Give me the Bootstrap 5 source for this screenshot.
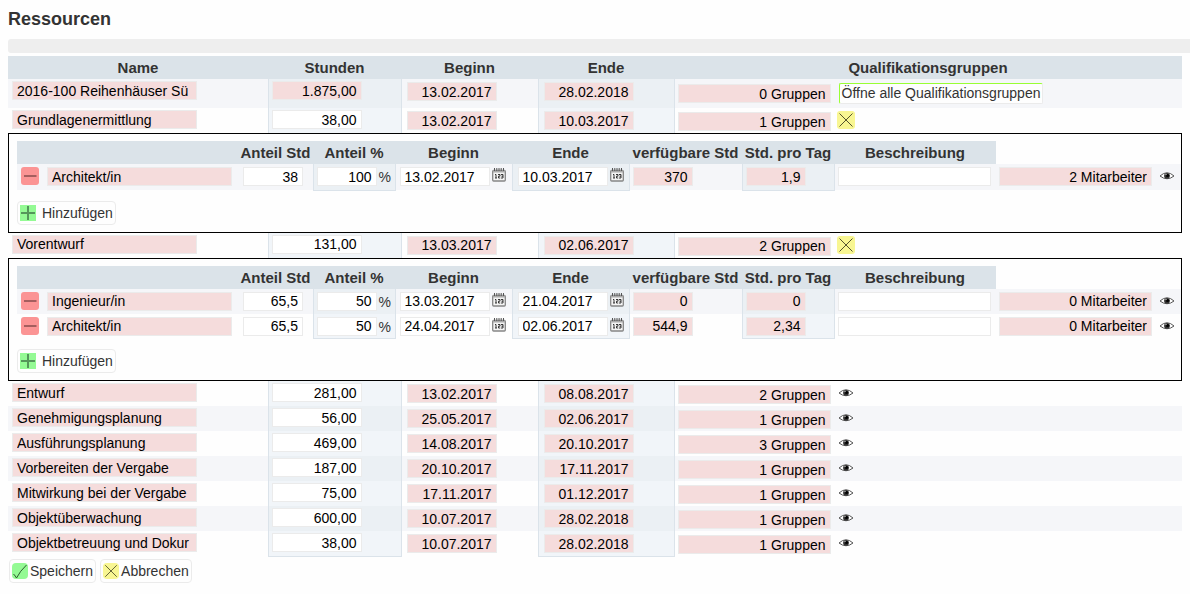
<!DOCTYPE html>
<html lang="de">
<head>
<meta charset="utf-8">
<meta name="viewport" content="width=device-width, initial-scale=1">
<title>Ressourcen</title>
<link rel="stylesheet" href="https://cdn.jsdelivr.net/npm/bootstrap@5.3.0/dist/css/bootstrap.min.css">
<style>
body{font:14px/18px "Liberation Sans",Arial,sans-serif;color:#333;background:#fefefe;padding:0 0 8px 8px}
h1{font-size:18px;line-height:20px;font-weight:700;margin:0;padding:9px 0 10px}
.strip{height:14px;background:#eee;border-radius:3px 0 0 3px;margin-bottom:3px}
.sheet{margin-right:8px}
/* resource grids */
.plan{--bs-table-bg:transparent;--bs-table-color:#333;table-layout:fixed;margin:0;color:#333;vertical-align:top}
.plan>thead>tr>th{height:23px;padding:1px 0 0;background:#dbe3e9;text-align:center;font-size:15px;line-height:22px;font-weight:700;white-space:nowrap}
.plan>thead>tr>th.open{background:transparent}
.plan>tbody>tr>td{padding:3px 0 0 3px;height:25px;line-height:18px}
.plan>tbody>tr.first>td{height:29px}
.plan>tbody>tr.first>td:last-child{padding-top:4px}
.plan>tbody>tr.tall>td{height:26px}
.plan>tbody>tr>td.up{padding-top:2px}
.plan>tbody>tr>td:first-child,.plan>tbody>tr>td:nth-child(2){padding-left:4px}
.plan>tbody>tr>td:nth-child(3){padding-left:5px}
.plan.inner>tbody>tr>td.day{padding-left:4px}
.plan>tbody>tr.shade>td{background:#f5f6f9}
.plan>tbody>tr>td.tint{background:#f1f5f9;border-left:1px solid #dbe3ea;border-right:1px solid #dbe3ea;padding-left:3px}
.plan>tbody>tr>td.tint.day{padding-left:5px}
.plan>tbody>tr.shade>td.tint{background:#ebf0f4}
.plan>tbody>tr:last-child>td.tint{border-bottom:1px solid #dbe3ea}
.plan>tbody>tr>td.nest{padding:0;height:auto}
.subplan{border:1px solid #000;padding:7px 0 7px 8px}
/* fields */
.fld{display:block;height:19px;border:1px solid #ebebeb;border-radius:0;padding:0 4px;background:#fff;color:#000;font:14px/17px "Liberation Sans",Arial,sans-serif}
.fld[readonly]{background:#f5dcdc}
.fld:focus{outline:1px solid #9ab}
.w-name{width:185px}.w-date{width:90px}.w-num{width:60px}.w-wide{width:153px}
.plan.main>tbody>tr>td>div>.w-wide{margin-top:1px}
.gap-s{gap:2px}.gap-m{gap:6px}
.unit{line-height:20px}
/* buttons */
.ico{display:block;width:18px;height:18px;padding:0;border:0;border-radius:3px;background:transparent;flex:none}
.ico svg,.cmd svg{display:block}
.ico.date{width:14px;height:16px}
.ico.red{background:#fb9494}.ico.yellow{background:#f8f692}
.cmd{height:24px;padding:0 2px;border:1px solid #ebebeb;border-radius:4px;background:#fefefe;color:#333;font-size:14px;line-height:20px}
.cmd i{width:16px;height:16px;flex:none}
.cmd.open-all{height:21px;padding:0 2px;border-radius:2px;border-top-color:#9f3;border-left-color:#9f3;margin-left:2px;line-height:19px}
.cmd.add{gap:6px;margin-top:10px}
.actions{margin:2px 0 0 1px;gap:4px}
.green{background:#94fa94}.yellow{background:#f8f692}
</style>
<script src="https://cdn.jsdelivr.net/npm/bootstrap@5.3.0/dist/js/bootstrap.bundle.min.js"></script>
</head>
<body>
<svg class="d-none" aria-hidden="true">
<symbol id="eye" viewBox="0 0 18 18"><path d="M2 9Q9 2.500 16 9Q9 14.500 2 9Z" fill="#fff" stroke="#555" stroke-width="1"/><circle cx="9" cy="8.800" r="2.900" fill="#333"/><circle cx="9.500" cy="8.500" r="1.600" fill="#000"/><circle cx="8" cy="7.500" r=".8" fill="#aaa"/></symbol>
<symbol id="cross" viewBox="0 0 18 18"><path d="M2.500 2.500 15.500 15.500M15.500 2.500 2.500 15.500" stroke="#54542c" fill="none"/></symbol>
<symbol id="minus" viewBox="0 0 18 18"><path d="M3 9H15.500" stroke="#a55e5e" stroke-width="2"/></symbol>
<symbol id="plus" viewBox="0 0 16 16"><path d="M1 8H15M8 1V15" stroke="#55965a" stroke-width="2"/></symbol>
<symbol id="tick" viewBox="0 0 16 16"><path d="M1.500 11Q3.500 13 4.500 15Q8 8 14.500 2" stroke="#2d5a2d" fill="none"/></symbol>
<symbol id="cal" viewBox="0 0 14 16"><rect x=".7" y="3.500" width="12.600" height="10.500" rx="1" fill="#f4f4f4" stroke="#858585" stroke-width="1.300"/><path d="M1 4.500H13" stroke="#aaa" stroke-width="2"/><path d="M2.500 1V4M4.800 1V4M7 1V4M9.200 1V4M11.500 1V4" stroke="#555"/><path d="M3 7.500H4V11M3 11H5M6 7.500H8V9.200H6.500V11H8.200M9 7.500H11V11H9M9.500 9.200H11" stroke="#222" fill="none" stroke-width=".9"/></symbol>
</svg>
<h1>Ressourcen</h1>
<div class="strip"></div>
<form class="sheet">
<table class="table table-borderless plan main w-100">
<colgroup><col style="width:260px"><col style="width:133px"><col style="width:137px"><col style="width:136px"><col></colgroup>
<thead><tr><th>Name</th><th>Stunden</th><th>Beginn</th><th>Ende</th><th>Qualifikationsgruppen</th></tr></thead>
<tbody>
<tr class="shade first">
<td class="up"><input class="fld w-name" aria-label="Name" readonly value="2016-100 Reihenhäuser Sü"></td>
<td class="up tint"><input class="fld w-date text-end" aria-label="Stunden" readonly value="1.875,00"></td>
<td class="day"><input class="fld w-date text-end" aria-label="Beginn" readonly value="13.02.2017"></td>
<td class="tint day"><input class="fld w-date text-end" aria-label="Ende" readonly value="28.02.2018"></td>
<td><div class="d-flex align-items-start gap-m"><input class="fld w-wide text-end" aria-label="Gruppen" readonly value="0 Gruppen"><button type="button" class="cmd open-all text-nowrap">Öffne alle Qualifikationsgruppen</button></div></td>
</tr>
<tr>
<td class="up"><input class="fld w-name" aria-label="Name" readonly value="Grundlagenermittlung"></td>
<td class="up tint"><input class="fld w-date text-end" aria-label="Stunden" value="38,00"></td>
<td class="day"><input class="fld w-date text-end" aria-label="Beginn" readonly value="13.02.2017"></td>
<td class="tint day"><input class="fld w-date text-end" aria-label="Ende" readonly value="10.03.2017"></td>
<td><div class="d-flex align-items-start gap-m"><input class="fld w-wide text-end" aria-label="Gruppen" readonly value="1 Gruppen"><button type="button" class="ico yellow" aria-label="Schließen"><svg width="18" height="18"><use href="#cross"/></svg></button></div></td>
</tr>
<tr><td class="nest" colspan="5"><div class="subplan">
<table class="table table-borderless plan inner w-100">
<colgroup><col style="width:26px"><col style="width:195px"><col style="width:75px"><col style="width:82px"><col style="width:117px"><col style="width:117px"><col style="width:113px"><col style="width:92px"><col style="width:162px"><col></colgroup>
<thead><tr><th></th><th></th><th>Anteil Std</th><th>Anteil %</th><th>Beginn</th><th>Ende</th><th>verfügbare Std</th><th>Std. pro Tag</th><th>Beschreibung</th><th class="open"></th></tr></thead>
<tbody>
<tr class="shade tall">
<td><button type="button" class="ico red" aria-label="Entfernen"><svg width="18" height="18"><use href="#minus"/></svg></button></td>
<td><input class="fld w-name" aria-label="Qualifikation" readonly value="Architekt/in"></td>
<td><input class="fld w-num text-end" aria-label="Anteil Std" value="38"></td>
<td class="tint"><label class="d-flex gap-s"><input class="fld w-num text-end" value="100"><span class="unit">%</span></label></td>
<td class="day"><div class="d-flex gap-s"><input class="fld w-date" aria-label="Beginn" value="13.02.2017"><button type="button" class="ico date" aria-label="Kalender"><svg width="14" height="16"><use href="#cal"/></svg></button></div></td>
<td class="tint day"><div class="d-flex gap-s"><input class="fld w-date" aria-label="Ende" value="10.03.2017"><button type="button" class="ico date" aria-label="Kalender"><svg width="14" height="16"><use href="#cal"/></svg></button></div></td>
<td><input class="fld w-num text-end" aria-label="verfügbare Std" readonly value="370"></td>
<td class="tint"><input class="fld w-num text-end" aria-label="Std. pro Tag" readonly value="1,9"></td>
<td><input class="fld w-wide" aria-label="Beschreibung"></td>
<td><div class="d-flex gap-m"><input class="fld w-wide text-end" aria-label="Mitarbeiter" readonly value="2 Mitarbeiter"><button type="button" class="ico" aria-label="Anzeigen"><svg width="18" height="18"><use href="#eye"/></svg></button></div></td>
</tr>
</tbody></table>
<button type="button" class="cmd add d-flex align-items-center"><i class="green"><svg width="16" height="16"><use href="#plus"/></svg></i>Hinzufügen</button>
</div></td></tr>
<tr>
<td class="up"><input class="fld w-name" aria-label="Name" readonly value="Vorentwurf"></td>
<td class="up tint"><input class="fld w-date text-end" aria-label="Stunden" value="131,00"></td>
<td class="day"><input class="fld w-date text-end" aria-label="Beginn" readonly value="13.03.2017"></td>
<td class="tint day"><input class="fld w-date text-end" aria-label="Ende" readonly value="02.06.2017"></td>
<td><div class="d-flex align-items-start gap-m"><input class="fld w-wide text-end" aria-label="Gruppen" readonly value="2 Gruppen"><button type="button" class="ico yellow" aria-label="Schließen"><svg width="18" height="18"><use href="#cross"/></svg></button></div></td>
</tr>
<tr><td class="nest" colspan="5"><div class="subplan">
<table class="table table-borderless plan inner w-100">
<colgroup><col style="width:26px"><col style="width:195px"><col style="width:75px"><col style="width:82px"><col style="width:117px"><col style="width:117px"><col style="width:113px"><col style="width:92px"><col style="width:162px"><col></colgroup>
<thead><tr><th></th><th></th><th>Anteil Std</th><th>Anteil %</th><th>Beginn</th><th>Ende</th><th>verfügbare Std</th><th>Std. pro Tag</th><th>Beschreibung</th><th class="open"></th></tr></thead>
<tbody>
<tr class="shade">
<td><button type="button" class="ico red" aria-label="Entfernen"><svg width="18" height="18"><use href="#minus"/></svg></button></td>
<td><input class="fld w-name" aria-label="Qualifikation" readonly value="Ingenieur/in"></td>
<td><input class="fld w-num text-end" aria-label="Anteil Std" value="65,5"></td>
<td class="tint"><label class="d-flex gap-s"><input class="fld w-num text-end" value="50"><span class="unit">%</span></label></td>
<td class="day"><div class="d-flex gap-s"><input class="fld w-date" aria-label="Beginn" value="13.03.2017"><button type="button" class="ico date" aria-label="Kalender"><svg width="14" height="16"><use href="#cal"/></svg></button></div></td>
<td class="tint day"><div class="d-flex gap-s"><input class="fld w-date" aria-label="Ende" value="21.04.2017"><button type="button" class="ico date" aria-label="Kalender"><svg width="14" height="16"><use href="#cal"/></svg></button></div></td>
<td><input class="fld w-num text-end" aria-label="verfügbare Std" readonly value="0"></td>
<td class="tint"><input class="fld w-num text-end" aria-label="Std. pro Tag" readonly value="0"></td>
<td><input class="fld w-wide" aria-label="Beschreibung"></td>
<td><div class="d-flex gap-m"><input class="fld w-wide text-end" aria-label="Mitarbeiter" readonly value="0 Mitarbeiter"><button type="button" class="ico" aria-label="Anzeigen"><svg width="18" height="18"><use href="#eye"/></svg></button></div></td>
</tr>
<tr>
<td><button type="button" class="ico red" aria-label="Entfernen"><svg width="18" height="18"><use href="#minus"/></svg></button></td>
<td><input class="fld w-name" aria-label="Qualifikation" readonly value="Architekt/in"></td>
<td><input class="fld w-num text-end" aria-label="Anteil Std" value="65,5"></td>
<td class="tint"><label class="d-flex gap-s"><input class="fld w-num text-end" value="50"><span class="unit">%</span></label></td>
<td class="day"><div class="d-flex gap-s"><input class="fld w-date" aria-label="Beginn" value="24.04.2017"><button type="button" class="ico date" aria-label="Kalender"><svg width="14" height="16"><use href="#cal"/></svg></button></div></td>
<td class="tint day"><div class="d-flex gap-s"><input class="fld w-date" aria-label="Ende" value="02.06.2017"><button type="button" class="ico date" aria-label="Kalender"><svg width="14" height="16"><use href="#cal"/></svg></button></div></td>
<td><input class="fld w-num text-end" aria-label="verfügbare Std" readonly value="544,9"></td>
<td class="tint"><input class="fld w-num text-end" aria-label="Std. pro Tag" readonly value="2,34"></td>
<td><input class="fld w-wide" aria-label="Beschreibung"></td>
<td><div class="d-flex gap-m"><input class="fld w-wide text-end" aria-label="Mitarbeiter" readonly value="0 Mitarbeiter"><button type="button" class="ico" aria-label="Anzeigen"><svg width="18" height="18"><use href="#eye"/></svg></button></div></td>
</tr>
</tbody></table>
<button type="button" class="cmd add d-flex align-items-center"><i class="green"><svg width="16" height="16"><use href="#plus"/></svg></i>Hinzufügen</button>
</div></td></tr>
<tr>
<td class="up"><input class="fld w-name" aria-label="Name" readonly value="Entwurf"></td>
<td class="up tint"><input class="fld w-date text-end" aria-label="Stunden" value="281,00"></td>
<td class="day"><input class="fld w-date text-end" aria-label="Beginn" readonly value="13.02.2017"></td>
<td class="tint day"><input class="fld w-date text-end" aria-label="Ende" readonly value="08.08.2017"></td>
<td><div class="d-flex gap-m"><input class="fld w-wide text-end" aria-label="Gruppen" readonly value="2 Gruppen"><button type="button" class="ico" aria-label="Anzeigen"><svg width="18" height="18"><use href="#eye"/></svg></button></div></td>
</tr>
<tr class="shade">
<td class="up"><input class="fld w-name" aria-label="Name" readonly value="Genehmigungsplanung"></td>
<td class="up tint"><input class="fld w-date text-end" aria-label="Stunden" value="56,00"></td>
<td class="day"><input class="fld w-date text-end" aria-label="Beginn" readonly value="25.05.2017"></td>
<td class="tint day"><input class="fld w-date text-end" aria-label="Ende" readonly value="02.06.2017"></td>
<td><div class="d-flex gap-m"><input class="fld w-wide text-end" aria-label="Gruppen" readonly value="1 Gruppen"><button type="button" class="ico" aria-label="Anzeigen"><svg width="18" height="18"><use href="#eye"/></svg></button></div></td>
</tr>
<tr>
<td class="up"><input class="fld w-name" aria-label="Name" readonly value="Ausführungsplanung"></td>
<td class="up tint"><input class="fld w-date text-end" aria-label="Stunden" value="469,00"></td>
<td class="day"><input class="fld w-date text-end" aria-label="Beginn" readonly value="14.08.2017"></td>
<td class="tint day"><input class="fld w-date text-end" aria-label="Ende" readonly value="20.10.2017"></td>
<td><div class="d-flex gap-m"><input class="fld w-wide text-end" aria-label="Gruppen" readonly value="3 Gruppen"><button type="button" class="ico" aria-label="Anzeigen"><svg width="18" height="18"><use href="#eye"/></svg></button></div></td>
</tr>
<tr class="shade">
<td class="up"><input class="fld w-name" aria-label="Name" readonly value="Vorbereiten der Vergabe"></td>
<td class="up tint"><input class="fld w-date text-end" aria-label="Stunden" value="187,00"></td>
<td class="day"><input class="fld w-date text-end" aria-label="Beginn" readonly value="20.10.2017"></td>
<td class="tint day"><input class="fld w-date text-end" aria-label="Ende" readonly value="17.11.2017"></td>
<td><div class="d-flex gap-m"><input class="fld w-wide text-end" aria-label="Gruppen" readonly value="1 Gruppen"><button type="button" class="ico" aria-label="Anzeigen"><svg width="18" height="18"><use href="#eye"/></svg></button></div></td>
</tr>
<tr>
<td class="up"><input class="fld w-name" aria-label="Name" readonly value="Mitwirkung bei der Vergabe"></td>
<td class="up tint"><input class="fld w-date text-end" aria-label="Stunden" value="75,00"></td>
<td class="day"><input class="fld w-date text-end" aria-label="Beginn" readonly value="17.11.2017"></td>
<td class="tint day"><input class="fld w-date text-end" aria-label="Ende" readonly value="01.12.2017"></td>
<td><div class="d-flex gap-m"><input class="fld w-wide text-end" aria-label="Gruppen" readonly value="1 Gruppen"><button type="button" class="ico" aria-label="Anzeigen"><svg width="18" height="18"><use href="#eye"/></svg></button></div></td>
</tr>
<tr class="shade">
<td class="up"><input class="fld w-name" aria-label="Name" readonly value="Objektüberwachung"></td>
<td class="up tint"><input class="fld w-date text-end" aria-label="Stunden" value="600,00"></td>
<td class="day"><input class="fld w-date text-end" aria-label="Beginn" readonly value="10.07.2017"></td>
<td class="tint day"><input class="fld w-date text-end" aria-label="Ende" readonly value="28.02.2018"></td>
<td><div class="d-flex gap-m"><input class="fld w-wide text-end" aria-label="Gruppen" readonly value="1 Gruppen"><button type="button" class="ico" aria-label="Anzeigen"><svg width="18" height="18"><use href="#eye"/></svg></button></div></td>
</tr>
<tr>
<td class="up"><input class="fld w-name" aria-label="Name" readonly value="Objektbetreuung und Dokur"></td>
<td class="up tint"><input class="fld w-date text-end" aria-label="Stunden" value="38,00"></td>
<td class="day"><input class="fld w-date text-end" aria-label="Beginn" readonly value="10.07.2017"></td>
<td class="tint day"><input class="fld w-date text-end" aria-label="Ende" readonly value="28.02.2018"></td>
<td><div class="d-flex gap-m"><input class="fld w-wide text-end" aria-label="Gruppen" readonly value="1 Gruppen"><button type="button" class="ico" aria-label="Anzeigen"><svg width="18" height="18"><use href="#eye"/></svg></button></div></td>
</tr>
</tbody></table>
<div class="d-flex actions">
<button type="submit" class="cmd d-flex align-items-center gap-s"><i class="green rounded-1"><svg width="16" height="16"><use href="#tick"/></svg></i>Speichern</button>
<button type="button" class="cmd d-flex align-items-center gap-s"><i class="yellow rounded-1"><svg width="16" height="16"><use href="#cross"/></svg></i>Abbrechen</button>
</div>
</form>
</body>
</html>
